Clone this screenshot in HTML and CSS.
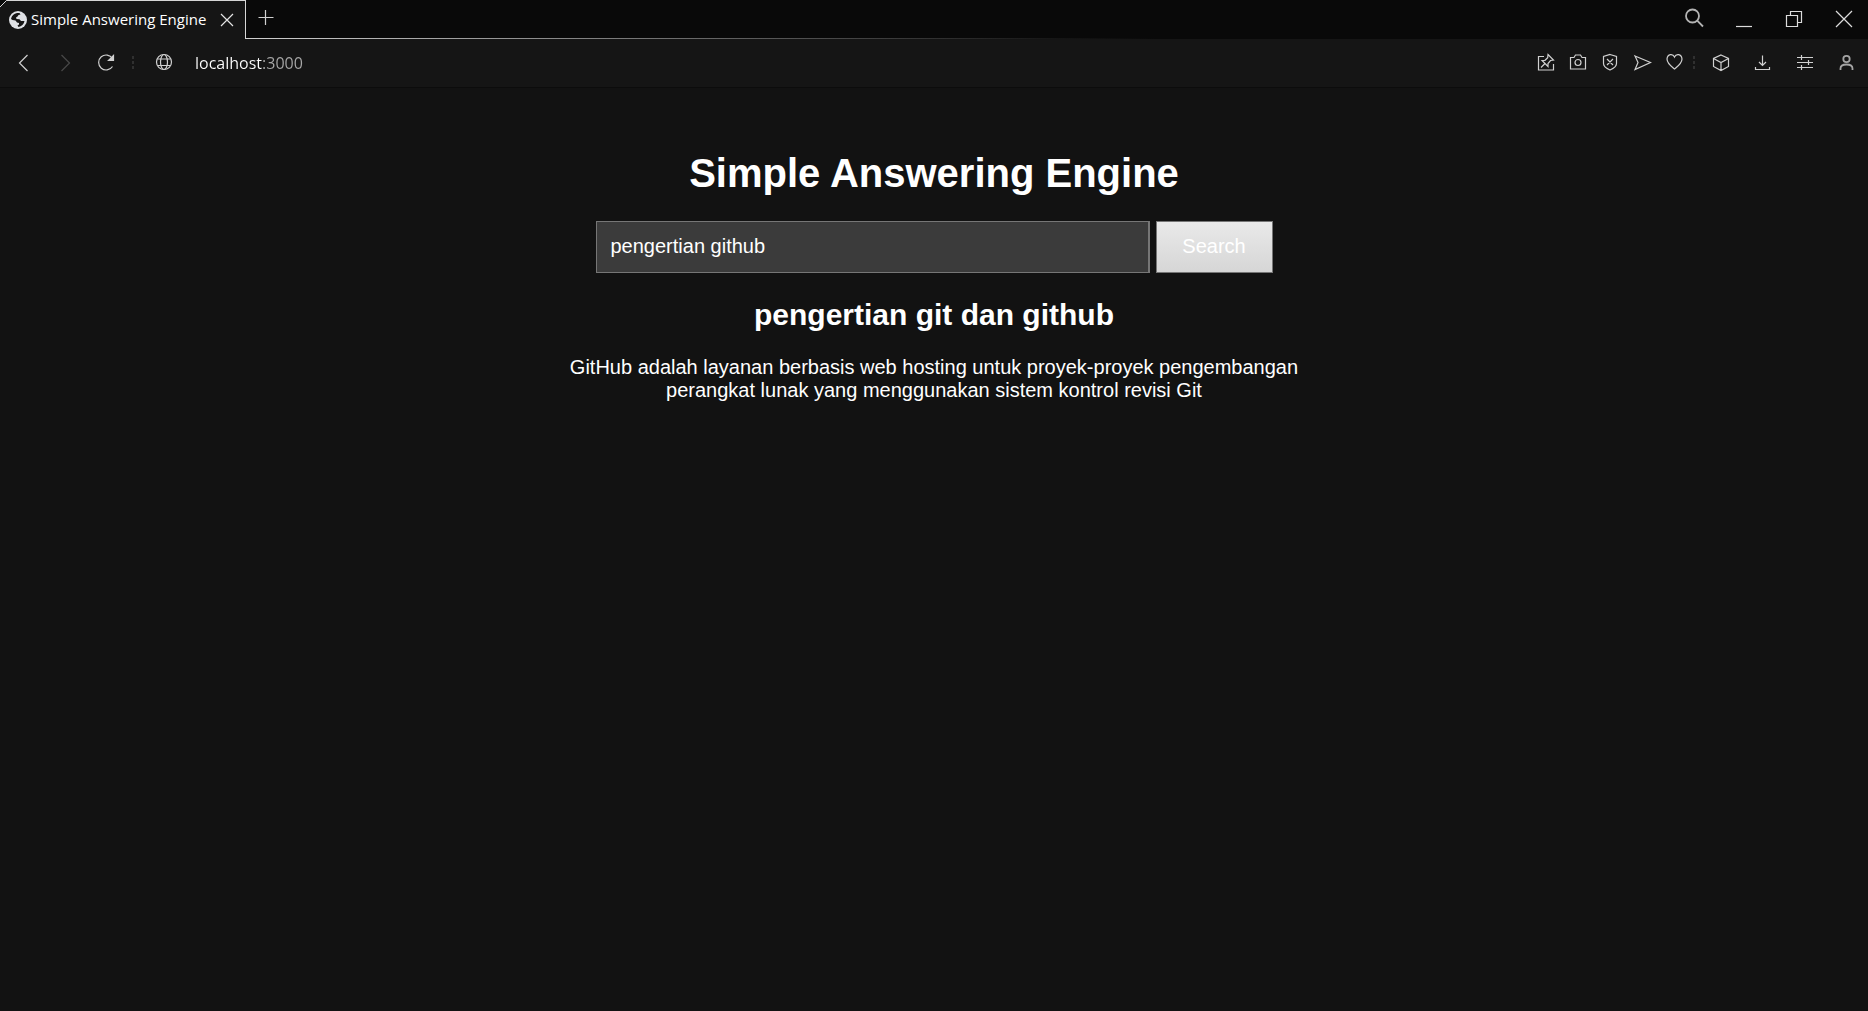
FILE: index.html
```html
<!DOCTYPE html>
<html lang="id">
<head>
<meta charset="utf-8">
<title>Simple Answering Engine</title>
<link rel="stylesheet" href="styles.css">
</head>
<body>
<header class="tabbar">
  <div class="tab">
    <svg class="tab-edge" viewBox="0 0 8 8" aria-hidden="true"><path class="tab-cut" d="M0 0h7L0 7z"/><path d="M0 7L6.500 .5H8"/></svg>
    <svg class="favicon" viewBox="0 0 18 18" aria-hidden="true"><circle cx="9" cy="9" r="9"/><path d="M2 8C2.500 5 5 2.500 8 2L10.500 2 11.500 3.500 9.500 4 8.500 5.500 7 6.500 7.500 8 10.500 8.200 12 10 15.500 10C15 13 12.500 15.500 9.500 16L8.500 14.500 10 13.500 10 12 8 11.500 6.500 9.500 3.500 9z"/></svg>
    <span class="tab-title">Simple Answering Engine</span>
    <button class="icon tab-close" type="button" aria-label="Close tab"><svg viewBox="0 0 24 24"><path d="M6 6l12 12M18 6L6 18"/></svg></button>
  </div>
  <div class="tabstrip">
    <button class="icon" type="button" aria-label="New tab"><svg viewBox="0 0 24 24"><path d="M4.500 11.500h15M11.500 4v15"/></svg></button>
    <div class="window-controls">
      <button class="icon" type="button" aria-label="Search tabs"><svg class="bold" viewBox="0 0 24 24"><circle cx="10.500" cy="10" r="6.500"/><path d="M15.200 14.700l5.800 5.800"/></svg></button>
      <button class="icon" type="button" aria-label="Minimize"><svg viewBox="0 0 24 24"><path d="M4 20.500h16"/></svg></button>
      <button class="icon" type="button" aria-label="Restore"><svg viewBox="0 0 24 24"><path d="M4.500 9.500h11v11h-11zM8.500 9.500v-4h11v11h-4"/></svg></button>
      <button class="icon" type="button" aria-label="Close"><svg viewBox="0 0 24 24"><path d="M4 5l16 16M20 5L4 21"/></svg></button>
    </div>
  </div>
</header>
<nav class="toolbar">
  <div class="history">
    <button class="icon" type="button" aria-label="Back"><svg viewBox="0 0 24 24"><path d="M15.500 4l-8 8 8 8"/></svg></button>
    <button class="icon" type="button" aria-label="Forward" disabled><svg viewBox="0 0 24 24"><path d="M8.500 4l8 8-8 8"/></svg></button>
    <button class="icon" type="button" aria-label="Reload"><svg viewBox="0 0 24 24"><path d="M18.500 7.500A7.500 7.500 0 1 0 18.500 15.500"/><path class="solid" d="M19.500 4.500v5h-5z"/></svg></button>
  </div>
  <span class="grip"></span>
  <button class="icon site" type="button" aria-label="Site information"><svg viewBox="0 0 24 24"><circle cx="12" cy="11" r="7.500"/><ellipse cx="12" cy="11" rx="3.500" ry="7.500"/><path d="M5.500 8h13M5.500 14.500h13"/></svg></button>
  <input class="address" type="text" aria-label="Address" value="localhost:3000">
  <div class="page-tools">
    <button class="icon" type="button" aria-label="Pin page"><svg viewBox="0 0 24 24"><path d="M10 5.500H4.500v13.500H19.500v-6"/><path d="M14 3.500l5.500 5.500-3 .5-2.500 3v3L8 9.500l3-.2 2.700-2.600zM11 12.500l-4 4"/></svg></button>
    <button class="icon" type="button" aria-label="Snapshot"><svg viewBox="0 0 24 24"><path d="M4.500 6.500h3.500l1.500-2.500h5l1.500 2.500h3.500v11.500h-15z"/><circle cx="12" cy="11.500" r="3"/></svg></button>
    <button class="icon" type="button" aria-label="Block ads"><svg viewBox="0 0 24 24"><path d="M12 3.500l6.500 2v7c0 3-3 5-6.500 6.500-3.500-1.500-6.500-3.500-6.500-6.500v-7zM9 8l6 6M15 8l-6 6"/></svg></button>
    <button class="icon" type="button" aria-label="Send page"><svg viewBox="0 0 24 24"><path d="M5 5l15.500 6.500L5 18.500l3-7z"/></svg></button>
    <button class="icon" type="button" aria-label="Bookmark"><svg viewBox="0 0 24 24"><path d="M12.500 6C11 2.500 5.500 2.500 5 8c0 4.500 5 8 7.500 10 2.500-2 7.500-5.500 7.500-10-.5-5.500-6-5.500-7.500-2z"/></svg></button>
  </div>
  <span class="grip"></span>
  <div class="browser-tools">
    <button class="icon" type="button" aria-label="Extensions"><svg viewBox="0 0 24 24"><path d="M12 4l7.500 3.500v8L12 19.500l-7.500-4v-8zM4.500 7.500L12 11.500l7.500-4M12 11.500v8"/></svg></button>
    <button class="icon" type="button" aria-label="Downloads"><svg viewBox="0 0 24 24"><path d="M11.500 4.500v10M8 11l3.500 3.500L15 11M4.500 16v2.500h14V16"/></svg></button>
    <button class="icon" type="button" aria-label="Easy setup"><svg viewBox="0 0 24 24"><path d="M4 6.500h16M4 11.500h16M4 16.500h16M8.500 4v5M15.500 9v5M8.500 14v5"/></svg></button>
    <button class="icon profile" type="button" aria-label="Profile"><svg class="bold" viewBox="0 0 24 24"><circle cx="11.500" cy="8" r="3.200"/><path d="M5.500 19v-1.500c0-3 2-4 6-4s6 1 6 4V19"/></svg></button>
  </div>
</nav>
<main class="page">
  <h1>Simple Answering Engine</h1>
  <form class="search">
    <input class="query" type="text" aria-label="Question" value="pengertian github">
    <button class="submit" type="button">Search</button>
  </form>
  <h2>pengertian git dan github</h2>
  <p class="answer">GitHub adalah layanan berbasis web hosting untuk proyek-proyek pengembangan perangkat lunak yang menggunakan sistem kontrol revisi Git</p>
</main>
</body>
</html>
```

FILE: styles.css
```css
* {
  box-sizing: border-box;
}

body {
  margin: 0;
  min-height: 100vh;
  background: #121212;
  color: #fff;
  font-family: "Liberation Sans", Arial, sans-serif;
}

.icon {
  flex: none;
  width: 24px;
  height: 24px;
  padding: 0;
  border: 0;
  background: none;
  color: #d0d0d0;
}

.icon svg {
  display: block;
  width: 24px;
  height: 24px;
  fill: none;
  stroke: currentColor;
  stroke-width: 1.2;
}

.icon .bold {
  stroke-width: 1.8;
}

.icon .solid {
  fill: currentColor;
}

.icon:disabled {
  color: #484848;
}

.tabbar {
  display: flex;
  height: 39px;
  background: #090909;
}

.tab {
  position: relative;
  display: flex;
  align-items: center;
  flex: none;
  width: 246px;
  padding: 0 6px 0 9px;
  border-top: 1px solid #d6d6d6;
  border-right: 1px solid #d6d6d6;
  background: #151515;
}

.tab-edge {
  position: absolute;
  top: -1px;
  left: 0;
  width: 8px;
  height: 8px;
  fill: none;
  stroke: #d6d6d6;
}

.tab-edge .tab-cut {
  fill: #090909;
  stroke: none;
}

.favicon {
  width: 18px;
  height: 18px;
  margin-right: 4px;
  fill: #151515;
}

.favicon circle {
  fill: #dfe1e5;
}

.tab-title {
  flex: 1;
  padding-bottom: 2px;
  font: 15px/20px "Open Sans", "Noto Sans", sans-serif;
  white-space: nowrap;
}

.tab-close {
  color: #e4e4e4;
}

.tabstrip {
  display: flex;
  flex: 1;
  justify-content: space-between;
  padding: 6px 12px 0 8px;
  background: linear-gradient(to right, #d0d0d0, #151515 50%, #090909 56%) bottom / 100% 1px no-repeat;
}

.window-controls {
  display: flex;
  gap: 26px;
}

.window-controls .icon {
  color: #dcdcdc;
}

.window-controls .bold {
  color: #b4b4b4;
}

.toolbar {
  display: flex;
  align-items: center;
  height: 49px;
  padding: 0 9px 0 12px;
  border-bottom: 1px solid #0c0c0c;
  background: #151515;
}

.history {
  display: flex;
  gap: 17px;
  margin-right: 14px;
}

.profile {
  color: #a4a4a4;
}

.grip {
  width: 2px;
  height: 14px;
  background: repeating-linear-gradient(#303030 0 3px, transparent 3px 5px);
}

.site {
  margin: 0 19px 0 18px;
}

.address {
  flex: 1;
  min-width: 0;
  padding: 0;
  border: 0;
  outline: 0;
  background: linear-gradient(to right, #fff 67px, #a8a8a8 67px);
  background-clip: text;
  color: transparent;
  font: 16px/20px "Open Sans", "Noto Sans", sans-serif;
}

.page-tools {
  display: flex;
  gap: 8px;
  margin-right: 7px;
}

.browser-tools {
  display: flex;
  gap: 18px;
  margin-left: 14px;
}

.page {
  max-width: 750px;
  margin: 0 auto;
  padding-top: 62px;
  text-align: center;
}

h1 {
  margin: 0 0 25px;
  font-size: 40px;
  line-height: 46px;
}

.search {
  display: flex;
  justify-content: center;
  gap: 6px;
  margin-bottom: 24px;
}

.query,
.submit {
  height: 52px;
  border: 1px solid #767676;
  border-radius: 0;
  color: #fff;
  font: 20px/23px "Liberation Sans", Arial, sans-serif;
}

.query {
  width: 554px;
  padding: 0 14px 2px;
  border-right-width: 2px;
  background: #3b3b3b;
}

.submit {
  width: 117px;
  padding: 0 0 2px;
  background: linear-gradient(#e9e9e9, #d6d6d6);
}

h2 {
  margin: 0 0 23px;
  font-size: 30px;
  line-height: 36px;
}

.answer {
  margin: 0;
  font-size: 20px;
  line-height: 23px;
}
```
